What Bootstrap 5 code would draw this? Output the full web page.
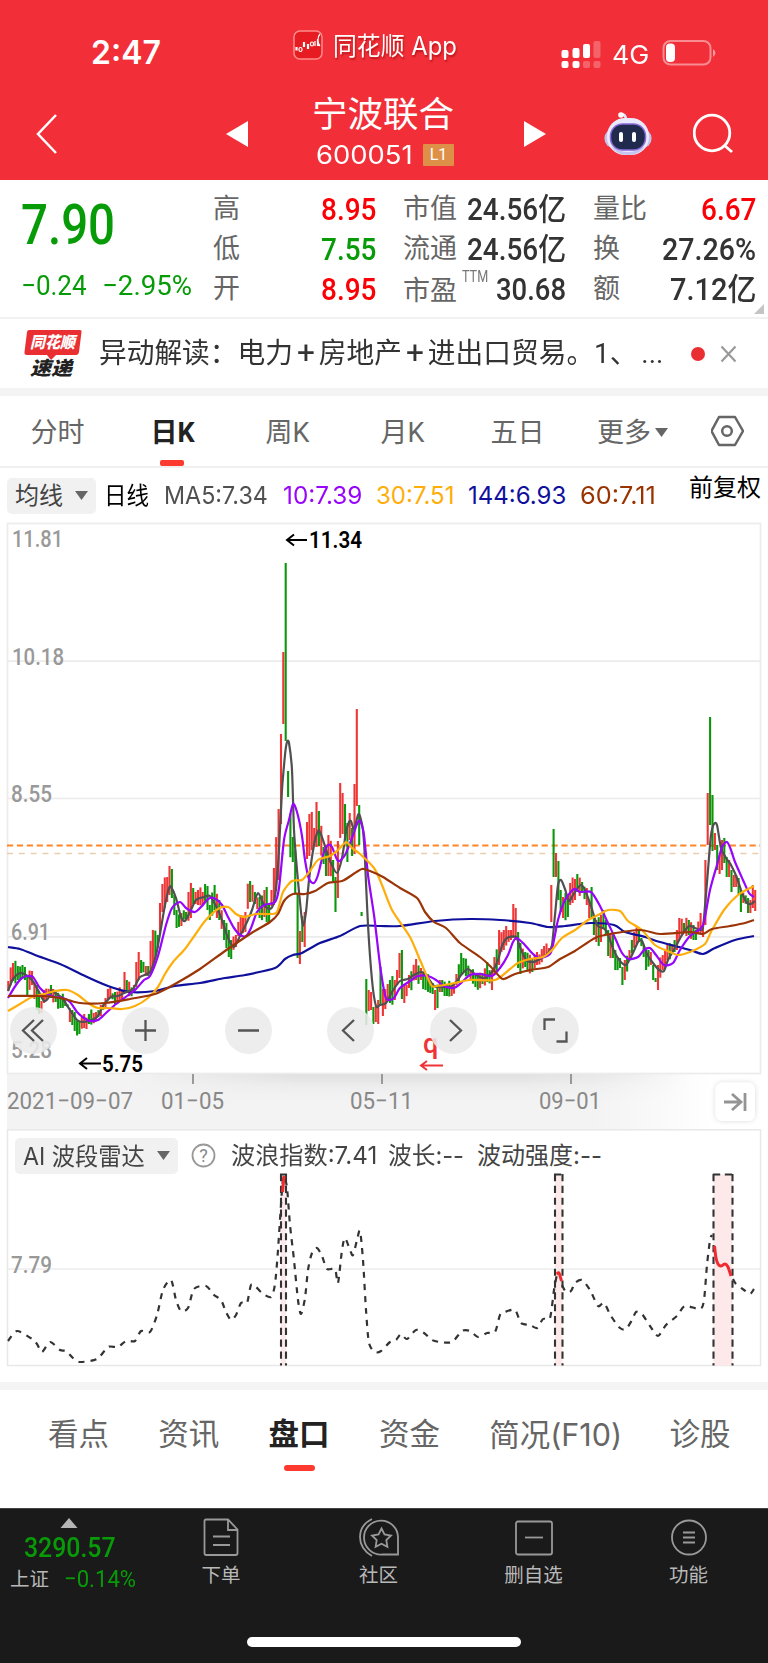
<!DOCTYPE html>
<html lang="zh-CN">
<head>
<meta charset="utf-8">
<meta name="viewport" content="width=device-width, initial-scale=1">
<title>宁波联合 600051</title>
<link href="https://cdn.jsdelivr.net/npm/bootstrap@5.3.0/dist/css/bootstrap.min.css" rel="stylesheet">
<style>
:root{--up:#fb0006;--down:#089b08;--ink:#333;--soft:#666;--brand:#f22f38}
body{width:768px;height:1663px;margin:0;overflow:hidden;background:#fff;color:var(--ink);font-family:Roboto,"Noto Sans CJK SC",sans-serif;line-height:1}
svg{display:block;flex:none}
[data-w]{display:inline-block;white-space:nowrap;transform-origin:0 50%}
[data-w].ralign{transform-origin:100% 50%}
.up{color:var(--up)!important}.down{color:var(--down)!important}
.inter{font-family:Inter,"Noto Sans CJK SC",sans-serif}
.topbar{height:180px;background:var(--brand);color:#fff}
.status-row{height:87px;display:grid;grid-template-columns:91px 202px 40px 228px 51px 50px 1fr;padding-top:18px}
.nav-row{height:93px;display:grid;grid-template-columns:36px 190px 86px 212px 80px 89px 1fr;align-items:center}
.time-text{font-size:32px;font-weight:600}
.app-text{font-size:25px;text-shadow:1px 2px 2px #8008}
.name-text{font-size:35.5px;line-height:38px;margin-top:-4px}
.code-box{width:107px}
.level-tag{width:31px;height:22px;background:#df9048;font-size:16px;border-radius:1px}
.quote{height:139px;padding:9px 11px 0 21px;border-bottom:2px solid #f1f1f1;position:relative;grid-template-columns:165px repeat(3,163px);column-gap:27px}
.quote .price{font-size:55px;font-weight:500;height:72px;line-height:73px}
.quote .chg{font-size:28px;height:48px;line-height:50px;display:grid;grid-template-columns:81px 1fr}
.qrow{height:40px;display:flex;justify-content:space-between;align-items:center;white-space:nowrap}
.qrow b{font-size:31px;font-weight:500;margin-left:-24px}
.qrow .cap{font-size:27px;color:#666}
.ttm{font-size:16px;color:#777;width:0;margin:-24px auto 0 5px}
.corner{position:absolute;right:4px;bottom:3px}
.news{height:69px;padding-left:24px}
.news-text{font-size:28px;width:592px}
.news-text i{font-style:normal;font-weight:400;font-size:32px;line-height:20px;margin:0 4px}
.strip{height:8px;background:#f4f4f4}
.period{height:72px;border-bottom:2px solid #f0f0f0}
.period .cell{width:115px;height:100%;font-size:27px;color:var(--soft);position:relative;padding-top:4px}
.on{font-weight:700;color:#222!important}
.period .on:after{content:"";position:absolute;width:24px;height:6px;border-radius:2px;background:#fd3a30;bottom:0;left:45px}
.ma-row{height:50px;padding:10px 0 0 7px;display:grid;grid-template-columns:97px 60px 119px 93px 92px 112px 109px 1fr;font-size:24px;line-height:36px}
.chip{background:#f1f1f1;border-radius:5px;height:36px;color:#444}
.stage{position:relative;height:611px}
.tools{position:absolute;left:10px;top:489px}
.tool{width:47px;height:47px;border-radius:50%;background:rgba(234,234,234,.88);margin-right:55.5px}
.tool:first-child{margin-right:65px}
.wave{position:relative;height:253px}
.wave-head{position:absolute;top:9px;left:15px;font-size:24px;line-height:35px;display:grid;grid-template-columns:163px 13px 40px 157px 89px 1fr;color:#444}
.sections{height:118px;padding:25px 0 0 48px;gap:49.3px;font-size:30.5px;line-height:40px;color:var(--soft)}
.sections .on{position:relative}
.sections .on:after{content:"";position:absolute;width:31px;height:6px;border-radius:3px;background:#fd3a30;left:15px;top:50px}
.f10{width:131px}
.dock{height:155px;background:#1a1a1a;border-top:1px solid #444;color:#b8b8b8;grid-template-columns:142px 158px 157px 153px 157px;font-size:19.5px;position:relative}
.index-box{padding-top:9px}
.idx-value{font-size:27px;font-weight:500;padding:7px 0 0 24px}
.idx-row{padding:5px 0 0 10px}
.idx-row .idx-name{width:54px;padding-top:2px}
.idx-row .idx-chg{font-size:24px}
.home-bar{position:absolute;left:247px;top:128px;width:274px;height:10px;border-radius:5px;background:#fff}
.dock svg{margin:9px auto 0}
.dock .lbl{margin-top:7px;line-height:24px}
.axis{font-family:Roboto,sans-serif;font-size:24px;fill:#999;font-weight:500}
.dates{fill:#888;font-weight:400}
</style>
</head>
<body>
<header class="topbar">
  <div class="status-row align-items-center">
    <span></span><span class="time-text inter"><span data-w="70">2:47</span></span>
    <svg class="mb-3" width="30" height="30" viewBox="0 0 30 30"><rect x="1" y="1" width="28" height="28" rx="6" fill="#e71c22" stroke="#ff8c8c" stroke-width="1.5"/><path d="M3.500 17v3.500M11 12v5M15 14v5M25 9v7" stroke="#fff" stroke-width="2.200"/><g fill="#e71c22" stroke="#fff" stroke-width="1.200"><rect x="6" y="17.500" width="3" height="4" rx="1.500"/><rect x="17.500" y="12" width="3" height="4" rx="1.500"/><path d="M22 11v5M27 4q-2 2-2 6t2 6"/></g></svg>
    <span class="mb-3 pt-1 app-text"><span class="inter" data-w="124">同花顺 App</span></span>
    <svg class="mt-1" width="40" height="28" viewBox="0 0 40 28" fill="#fff"><rect x="0.500" y="9" width="7" height="8" rx="2"/><rect x="11.500" y="7" width="7" height="10" rx="2"/><rect x="22" y="3" width="7" height="14" rx="2"/><rect x="32.500" y="0" width="7" height="17" rx="2" opacity=".25"/><rect x="0.500" y="20" width="7" height="7" rx="2"/><rect x="11.500" y="20" width="7" height="7" rx="2"/><rect x="22" y="20" width="7" height="7" rx="2" opacity=".25"/><rect x="32.500" y="20" width="7" height="7" rx="2" opacity=".25"/></svg>
    <span class="inter fs-3 pt-1"><span data-w="37">4G</span></span>
    <svg width="56" height="28" viewBox="0 0 56 28"><rect x="1.500" y="2" width="47" height="23.500" rx="7" fill="none" stroke="#fff" stroke-opacity=".45" stroke-width="2"/><rect x="4" y="4.500" width="9" height="18.500" rx="4" fill="#fff"/><path d="M51 10q5 4 0 8z" fill="#fff" opacity=".5"/></svg>
  </div>
  <div class="nav-row">
    <span></span>
    <svg width="22" height="42" viewBox="0 0 22 42"><path d="M20 2 2 21 20 40" fill="none" stroke="#fff" stroke-width="2.500"/></svg>
    <svg width="22" height="26"><path d="M22 0v26L0 13z" fill="#fff"/></svg>
    <div><div class="name-text">宁波联合</div>
      <div class="d-flex align-items-center mt-2 ps-1"><span class="inter fs-3 code-box"><span data-w="97">600051</span></span><span class="level-tag d-flex align-items-center justify-content-center">L1</span></div></div>
    <svg width="22" height="26"><path d="M0 0v26l22-13z" fill="#fff"/></svg>
    <svg width="48" height="48" viewBox="0 0 48 48"><path d="M22 10q0-6-5-6" fill="none" stroke="#e5e2ff" stroke-width="2.500"/><circle cx="17" cy="5" r="2.800" fill="#fff"/><rect x="0.500" y="19" width="47" height="19" rx="9" fill="#c4c3ee"/><rect x="3" y="8" width="42" height="37" rx="18" fill="#ebeafc"/><path d="M7 36q17 12 34 0-5 9-17 9T7 36" fill="#c5c5f0"/><rect x="6.500" y="14" width="35" height="26" rx="12" fill="#202a4c" stroke="#8a68d8" stroke-width="1.500"/><rect x="15" y="22" width="4" height="10" rx="2" fill="#fff"/><rect x="28" y="22" width="4" height="10" rx="2" fill="#fff"/></svg>
    <svg width="42" height="42" viewBox="0 0 42 42"><circle cx="19" cy="20" r="17.800" fill="none" stroke="#fff" stroke-width="2.800"/><path d="m31 32 8 7" stroke="#fff" stroke-width="2.800"/></svg>
  </div>
</header>

<section class="quote d-grid">
  <div>
    <div class="price down"><span data-w="94">7.90</span></div>
    <div class="chg down"><span><span data-w="66">−0.24</span></span><span><span data-w="90">−2.95%</span></span></div>
  </div>
  <div>
    <div class="qrow"><span class="cap">高</span><b class="up ralign" data-w="55">8.95</b></div>
    <div class="qrow"><span class="cap">低</span><b class="down ralign" data-w="55">7.55</b></div>
    <div class="qrow"><span class="cap">开</span><b class="up ralign" data-w="55">8.95</b></div>
  </div>
  <div>
    <div class="qrow"><span class="cap">市值</span><b class="ralign" data-w="99">24.56亿</b></div>
    <div class="qrow"><span class="cap">流通</span><b class="ralign" data-w="99">24.56亿</b></div>
    <div class="qrow"><span class="cap pt-1">市盈</span><span class="ttm"><span data-w="26">TTM</span></span><b class="ralign" data-w="70">30.68</b></div>
  </div>
  <div>
    <div class="qrow"><span class="cap">量比</span><b class="up ralign" data-w="55">6.67</b></div>
    <div class="qrow"><span class="cap">换</span><b class="ralign" data-w="94">27.26%</b></div>
    <div class="qrow"><span class="cap">额</span><b class="ralign" data-w="86">7.12亿</b></div>
  </div>
  <svg class="corner" width="10" height="10"><path d="M10 0v10H0z" fill="#c4c4c4"/></svg>
</section>

<section class="news d-flex align-items-center">
  <svg width="75" height="50" viewBox="0 0 75 50"><path d="M5 1h51q2 0 1.500 2l-2.500 20q-.5 3-3 3H32l-5 5-4-5H3q-3 0-2.500-3L3 3q.5-2 2-2" fill="#ea2f33"/><g font-family="Noto Sans CJK SC" font-weight="900" font-style="italic"><text x="6" y="19" font-size="16" textLength="45" lengthAdjust="spacingAndGlyphs" fill="#fff">同花顺</text><text x="6" y="46" font-size="19" textLength="42" lengthAdjust="spacingAndGlyphs" fill="#222">速递</text></g></svg>
  <div class="news-text"><span data-w="564">异动解读：电力<i>+</i>房地产<i>+</i>进出口贸易。1、<span class="ms-1">...</span></span></div>
  <svg width="50" height="20" viewBox="0 0 50 20"><circle cx="7" cy="10" r="7" fill="#ea2f33"/><path d="m30.500 2.500 14 15M44.500 2.500l-14 15" stroke="#999" stroke-width="2.200"/></svg>
</section>
<div class="strip"></div>

<nav class="period d-flex align-items-center">
  <div class="cell d-flex align-items-center justify-content-center">分时</div>
  <div class="cell on d-flex align-items-center justify-content-center">日K</div>
  <div class="cell d-flex align-items-center justify-content-center">周K</div>
  <div class="cell d-flex align-items-center justify-content-center">月K</div>
  <div class="cell d-flex align-items-center justify-content-center">五日</div>
  <div class="cell d-flex align-items-center justify-content-center gap-1">更多<svg width="13" height="10"><path d="M0 0h13L6.500 9z" fill="#666"/></svg></div>
  <svg class="ms-auto me-4" width="33" height="32" viewBox="1 0 33 32"><path d="M9 2h16l8 14-8 14H9L1.500 16z" fill="none" stroke="#666" stroke-width="2.500" stroke-linejoin="round"/><circle cx="17" cy="16" r="4.800" fill="none" stroke="#666" stroke-width="2.500"/></svg>
</nav>

<div class="ma-row">
  <span class="chip d-flex align-items-center justify-content-between px-2 me-2"><span data-w="48">均线</span><svg width="13" height="10"><path d="M0 0h13L6.500 9z" fill="#666"/></svg></span>
  <span class="text-black"><span data-w="45">日线</span></span>
  <span style="color:#505050"><span class="inter" data-w="104">MA5:7.34</span></span>
  <span style="color:#9706fa"><span class="inter" data-w="79">10:7.39</span></span>
  <span style="color:#feae0b"><span class="inter" data-w="78">30:7.51</span></span>
  <span style="color:#10109d"><span class="inter" data-w="98">144:6.93</span></span>
  <span style="color:#993300"><span class="inter" data-w="76">60:7.11</span></span>
  <span class="text-black" style="margin-top:-8px"><span data-w="72">前复权</span></span>
</div>

<div class="stage">
  <svg id="kline" width="768" height="611" viewBox="0 518 768 611">
    <defs>
      <linearGradient id="fadeR"><stop offset="0" stop-color="#f3f3f3"/><stop offset=".78" stop-color="#f3f3f3"/><stop offset=".94" stop-color="#fff"/></linearGradient>
      <linearGradient id="shade" x2="0" y2="1"><stop offset="0" stop-color="#dedede"/><stop offset="1" stop-color="#f3f3f3" stop-opacity="0"/></linearGradient>
      <linearGradient id="side"><stop offset="0" stop-color="#fff" stop-opacity="0"/><stop offset=".3" stop-color="#fff"/><stop offset=".7" stop-color="#fff"/><stop offset="1" stop-color="#fff" stop-opacity="0"/></linearGradient>
      <mask id="mid"><rect x="130" y="1070" width="560" height="50" fill="url(#side)"/></mask>
      <filter id="soft" x="-30%" y="-30%" width="160%" height="160%"><feDropShadow dx="0" dy="0" stdDeviation="2.500" flood-opacity=".15"/></filter>
    </defs>
    <rect x="7" y="1074" width="753" height="55" fill="url(#fadeR)"/>
    <rect x="130" y="1074" width="560" height="28" fill="url(#shade)" mask="url(#mid)"/>
    <g fill="none" stroke="#ececec" stroke-width="1.700"><rect x="7.500" y="523.500" width="753" height="550"/><path d="M8 661.200h752M8 798.500h752M8 936.800h752"/></g>
    <g class="axis">
      <text x="12" y="547" textLength="51" lengthAdjust="spacingAndGlyphs">11.81</text>
      <text x="12" y="665" textLength="52" lengthAdjust="spacingAndGlyphs">10.18</text>
      <text x="11" y="802" textLength="41" lengthAdjust="spacingAndGlyphs">8.55</text>
      <text x="11" y="940" textLength="39" lengthAdjust="spacingAndGlyphs">6.91</text>
      <text x="11" y="1058" textLength="41" lengthAdjust="spacingAndGlyphs">5.28</text>
    </g>
    <path d="M7 845.500h753" stroke="#ff8529" stroke-width="2.200" stroke-dasharray="6.200 3.700"/>
    <path d="M7 853.500h753" stroke="#e9cfae" stroke-width="1.700" stroke-dasharray="6 5.830"/>
    <g id="bars" stroke-width="2.100"></g>
    <g id="lines" fill="none" stroke-width="2.200" stroke-linejoin="round"></g>
    <g fill="none" stroke="#000" stroke-width="2"><path d="M307 540h-20m7-5.500-7 5.500 7 5.500M101 1063.500H80m7-5.500-7 5.500 7 5.500"/><path d="M443 1065.500h-22m6-4.500-6 4.500 6 4.500" stroke="#ef3338"/></g>
    <g font-size="24" font-weight="600" font-family="Roboto"><text x="309" y="548" textLength="53" lengthAdjust="spacingAndGlyphs">11.34</text><text x="102" y="1071.500" textLength="41" lengthAdjust="spacingAndGlyphs">5.75</text><text x="423" y="1053" font-size="27" font-weight="500" fill="#ef3338">q</text></g>
    <path d="M193 1074v10M382 1074v10M571 1074v10" stroke="#999" stroke-width="2"/>
    <g class="axis dates">
      <text x="7" y="1108.500" textLength="126" lengthAdjust="spacingAndGlyphs">2021−09−07</text>
      <text x="161" y="1108.500" textLength="63" lengthAdjust="spacingAndGlyphs">01−05</text>
      <text x="350" y="1108.500" textLength="63" lengthAdjust="spacingAndGlyphs">05−11</text>
      <text x="539" y="1108.500" textLength="62" lengthAdjust="spacingAndGlyphs">09−01</text>
    </g>
    <rect x="715.500" y="1082.500" width="39.500" height="38.500" rx="7" fill="#fff" filter="url(#soft)"/>
    <path d="M724 1102h16M732 1094l9 8-9 8M745 1093v18" fill="none" stroke="#949494" stroke-width="2.800"/>
  </svg>
  <div class="tools d-flex">
    <svg class="tool" viewBox="0 0 47 47"><path d="M24 13 13 23.500 24 34M33 13 22 23.500 33 34" fill="none" stroke="#555" stroke-width="2.300"/></svg>
    <svg class="tool" viewBox="0 0 47 47"><path d="M13 23.500h21M23.500 13v21" stroke="#555" stroke-width="2.300"/></svg>
    <svg class="tool" viewBox="0 0 47 47"><path d="M13 23.500h21" stroke="#555" stroke-width="2.300"/></svg>
    <svg class="tool" viewBox="0 0 47 47"><path d="M27 13 16 23.500 27 34" fill="none" stroke="#555" stroke-width="2.300"/></svg>
    <svg class="tool" viewBox="0 0 47 47"><path d="M20 13 31 23.500 20 34" fill="none" stroke="#555" stroke-width="2.300"/></svg>
    <svg class="tool" viewBox="0 0 47 47"><path d="M12.500 23V12.500H23M34.500 24.500v10H24.500" fill="none" stroke="#555" stroke-width="2.300"/></svg>
  </div>
</div>

<div class="wave">
  <svg id="wavesvg" width="768" height="253" viewBox="0 1129 768 253">
    <rect x="7.500" y="1129.800" width="753" height="235.700" fill="#fff" stroke="#e8e8e8" stroke-width="1.500"/>
    <path d="M8 1269h752" stroke="#ececec" stroke-width="1.500"/>
    <g fill="#fde9e9"><path d="M281 1174.500h5v191h-5zM555 1174.500h7.500v191H555zM713.500 1174.500h19v191h-19z"/></g>
    <g fill="none" stroke="#333" stroke-width="2.100" stroke-dasharray="7.200 4.630"><path d="M281 1174v191.500M286 1174v191.500M555 1174v191.500M562.500 1174v191.500M713.500 1174v191.500M732.500 1174v191.500M280 1174.500h7M554 1174.500h9.500M713 1174.500h20"/></g>
    <text class="axis" x="11" y="1273" textLength="41" lengthAdjust="spacingAndGlyphs">7.79</text>
  </svg>
  <div class="wave-head">
    <span class="chip d-flex align-items-center justify-content-between px-2"><span class="inter" data-w="122">AI 波段雷达</span><svg width="13" height="10"><path d="M0 0h13L6.500 9z" fill="#666"/></svg></span>
    <span></span>
    <svg class="mt-1" width="26" height="28" viewBox="0 0 26 28"><circle cx="12.500" cy="13.500" r="11" fill="none" stroke="#999" stroke-width="1.800"/><text x="12.500" y="20" text-anchor="middle" font-size="18" fill="#888">?</text></svg>
    <span><span class="inter" data-w="146">波浪指数:7.41</span></span>
    <span><span class="inter" data-w="76">波长:--</span></span>
    <span><span class="inter" data-w="125">波动强度:--</span></span>
  </div>
</div>
<div class="strip"></div>

<nav class="sections d-flex text-nowrap">
  <span>看点</span><span>资讯</span><span class="on">盘口</span><span>资金</span><span class="f10"><span class="inter" data-w="133">简况(F10)</span></span><span>诊股</span>
</nav>

<footer class="dock d-grid text-center">
  <div class="index-box">
    <svg class="m-0" width="142" height="10"><path d="M60.500 10h17L69 0z" fill="#b5b5b5"/></svg>
    <div class="text-start down idx-value"><span data-w="92">3290.57</span></div>
    <div class="d-flex align-items-center idx-row"><span class="idx-name text-start">上证</span><span class="down idx-chg" data-w="72">−0.14%</span></div>
  </div>
  <div><svg width="37" height="39" viewBox="0 0 37 39"><path d="M3 1.500h22l9.500 10V35q0 2-2 2H3q-1.500 0-1.500-2V3Q1.500 1.500 3 1.500M25 1.500V12h9.500M10 18.500h17M10 27h17" fill="none" stroke="#999" stroke-width="1.800"/></svg><div class="lbl">下单</div></div>
  <div><svg width="42" height="39" viewBox="0 0 42 39"><path d="M14 1q-12 6-12 18t12 19M40 36.500H24.500A17 17 0 1 1 40 20z" fill="none" stroke="#999" stroke-width="1.800"/><path d="m23.500 10.500 3 6 6.500 1-4.700 4.600 1.100 6.700-5.900-3.100-5.900 3.100 1.100-6.700L14 17.500l6.500-1z" fill="none" stroke="#999" stroke-width="1.800"/></svg><div class="lbl">社区</div></div>
  <div><svg width="40" height="39" viewBox="0 0 40 39"><rect x="2" y="3.500" width="36" height="33" rx="2" fill="none" stroke="#999" stroke-width="1.800"/><path d="M11 19.500h18" stroke="#999" stroke-width="1.800"/></svg><div class="lbl">删自选</div></div>
  <div><svg width="40" height="39" viewBox="0 0 40 39"><circle cx="20" cy="19.500" r="17" fill="none" stroke="#999" stroke-width="1.800"/><path d="M14 14.500h12M14 19.500h12M14 24.500h12" stroke="#999" stroke-width="1.800"/></svg><div class="lbl">功能</div></div>
  <div class="home-bar"></div>
</footer>

<script src="https://cdn.jsdelivr.net/npm/bootstrap@5.3.0/dist/js/bootstrap.bundle.min.js"></script>
<script>
document.querySelectorAll('[data-w]').forEach(el=>{el.style.transform='scaleX('+(el.dataset.w/el.offsetWidth).toFixed(4)+')'});

const NS='http://www.w3.org/2000/svg';
function add(parent,tag,attrs){const e=document.createElementNS(NS,tag);for(const k in attrs)e.setAttribute(k,attrs[k]);parent.appendChild(e);return e}
const pts=s=>s.trim().split(/\s+/).map(p=>p.split(',').map(Number));
function curve(p){let d='M'+p[0];for(let i=0;i<p.length-1;i++){const a=p[i-1]||p[i],b=p[i],c=p[i+1],e=p[i+2]||c,t=.13;d+='C'+[b[0]+(c[0]-a[0])*t,b[1]+(c[1]-a[1])*t,c[0]-(e[0]-b[0])*t,c[1]-(e[1]-b[1])*t,c[0],c[1]].map(v=>v.toFixed(1)).join(' ')}return d}

// x, high, low, and r (up) or g (down) where the day's direction is fixed
const bars='8,981,991,r 13,963,981,r 18,966,980,g 24,967,980,g 28,975,995,g 32,971,985,r 36,985,1010,g 41,1001,1013,r 45,990,1003 50,985,998,g 55,990,1002,g 60,996,1008,g 66,998,1006 72,1010,1025,g 79,1022,1034,g 84,1014,1028 90,1014,1024 95,1012,1021,r 100,1005,1016,r 105,998,1007,r 109,989,1000 115,992,1004,g 121,990,1000 124,972,993,r 128,980,993,g 133,985,992 138,952,980,r 142,960,973,g 147,966,976 152,930,970,r 157,935,948,g 160,903,935,r 162,884,912,r 166,877,902,r 169,866,895,r 171,869,898,g 174,895,915,g 177,910,928,g 181,913,926,r 186,912,920 190,883,918,r 193,888,904,g 198,890,905 202,892,905,r 205,884,902 208,886,910,g 210,905,920,g 214,885,910,g 219,900,920,g 225,920,940,g 228,930,957,g 231,940,959,g 235,935,947,r 240,915,935,r 245,912,932 249,868,900,r 251,881,902,g 256,892,904 259,897,918,g 264,890,917,r 266,887,922,g 270,905,922,g 272.5,890,906,r 275,868,905,r 277.5,809,880,r 279.8,734,824,r 282.3,652,724,r 284.7,563,741,g 287,771,797,g 289.2,793,846,r 291.7,837,862,g 294,850,894,g 296.5,893,958,g 299,931,964,r 301.3,916,942,g 303.6,912,947,r 305.8,850,880,r 308.2,822,859,r 310.5,814,856,r 313,809,846,r 315.2,828,845,r 317.6,802,847,r 320,811,846,g 323,847,864,g 326,850,876,g 329.5,835,876,r 332,842,872,g 334.2,860,881,g 336.5,877,912,g 339,841,898,r 341.4,783,838,r 343.7,793,834,r 346,804,840,g 348.3,823,862,g 350.6,813,840,r 353,828,856,g 355.4,784,854,r 357.9,709,806,r 360.3,805,845,g 362.6,912,916,g 367.3,979,1025,g 369.7,990,1011,r 372,992,1010,r 374.5,1007,1024,g 377,1006,1022,r 379.2,1000,1024,r 381.5,967,1005,g 384,989,1016,r 387,984,1000,r 391,980,1003,g 395,980,1000,r 398,970,985,r 400.3,953,978,r 402.6,950,999,g 405,985,1003,r 410,975,988 416,959,980,r 420,968,980 426,975,990,g 432,983,994,g 436,990,1010,r 441,980,992 446,984,996,g 452,985,996,r 457,974,985,r 462,953,975,g 464,958,972,g 470,970,980 476,975,987 482,973,984 487,962,982,g 491,970,990,r 495,957,975,r 499,930,965,r 503,930,950 510,930,940 513.7,904,938,r 516,908,940,r 518.5,932,968,g 521,943,974,g 526,952,967 532,958,972,g 538,952,965,r 545,946,958,r 549.5,948,953,r 551.8,885,922,r 554.1,829,877,g 556.4,853,877,r 558.7,861,900,g 561,890,912,g 564,897,918,r 568,895,917,g 571,883,905,r 575,879,900,r 578,874,892,g 583,882,893 588,888,905 590,900,918,r 592,887,918,g 595,915,935,g 597,920,942,r 601,915,942,r 603,910,928,g 606,920,935,g 609,930,956,g 613,935,958 616,950,970,g 620,958,968,g 623,967,985,g 625,960,980,r 630,950,960,r 634,932,948,r 638,930,942,g 642,938,946,g 646,950,970,g 650,952,965,r 653,965,980,g 656,978,982,g 658,965,990,r 663,955,970,r 668,945,960,r 674,940,952 677,930,950,r 680,918,940,r 683,923,932 689,920,935,g 693,925,940 696,930,940,g 701,913,935,r 703,925,937,r 705.3,860,925,r 707.5,793,845,r 709.8,717,825,g 712.2,795,851,g 714.5,833,850,r 717,845,870,g 719.3,855,874,r 721.7,840,870,r 724,838,863,g 727,857,877,g 729,860,877,r 732,870,892,g 735,875,887,r 738,878,895,g 741,890,912,g 744,893,903,r 748,898,913,g 751,900,913,r 753,885,908,r 755,890,911,r'.split(' ').map(b=>b.split(','));
let seed=11;const rnd=()=>(seed=(seed*16807)%2147483647)/2147483647;
const gb=document.getElementById('bars');
for(let x=8.3,k=0;x<756;x+=2.371){
  while(k<bars.length-2&&+bars[k+1][0]<x)k++;
  const a=bars[k],b=bars[k+1],t=Math.max(0,Math.min(1,(x-a[0])/(b[0]-a[0]))),n=t<.5?a:b,near=Math.abs(n[0]-x)<1.2;
  if(x>363.5&&x<366.1)continue;
  let hi=near?+n[1]:+a[1]+(b[1]-a[1])*t+(rnd()-.5)*8,lo=near?+n[2]:+a[2]+(b[2]-a[2])*t+(rnd()-.5)*8;
  const c=near&&n[3]?n[3]:(rnd()<(+b[1]>+a[1]?.3:.65)?'r':'g');
  add(gb,'path',{d:`M${x.toFixed(1)} ${hi.toFixed(1)}V${lo.toFixed(1)}`,stroke:c=='r'?'#ef3535':'#0b960b'});
}
const gl=document.getElementById('lines');
[['#10109d','8,947 20,949 35,955 60,964 85,976 108,986 130,992 155,991 175,986 200,983 225,978 245,975 275,968 285,959 293,955 302,953 320,943 340,936 360,926 380,926 400,926 435,921 470,919 500,920 530,923 548,927 565,926 590,923 614,925 625,932 645,937 660,942 690,950 703,954 715,948 735,940 754,936'],
['#505050','8,991 13,979 20,973 26,975 32,980 38,990 44,1001 49,997 51,990 55,993 62,998 70,1010 77,1020 83,1022 92,1020 98,1016 103,1006 111,997 118,996 124,993 133,989 140,977 150,972 156,955 160,934 165,905 169,888 171,887 176,898 181,917 185,921 190,912 196,900 204,897 210,896 217,908 222,920 228,938 234,947 240,936 247,922 252,910 258,893 264,905 270,909 274,902 277,878 279,850 282,790 285,755 287,742 289,743 292,770 294,830 297,870 301,912 303,926 306,912 309,880 314,845 318,831 320,832 324,843 330,861 337,873 342,858 346,832 349,822 351,821 354,829 358,815 360,816 363,830 365,860 368,925 372,980 376,1006 380,1005 386,1003 392,992 400,981 408,979 414,975 422,972 428,978 434,986 440,987 450,987 456,982 462,974 468,969 476,975 484,978 492,972 498,960 502,946 507,938 516,937 520,947 526,960 533,962 540,959 548,953 552,945 555,915 558,885 561,880 565,889 569,901 573,895 577,889 581,885 585,890 591,906 597,925 603,928 607,932 614,951 620,961 626,965 632,955 638,942 642,941 647,954 653,963 659,970 664,971 668,960 676,946 682,935 689,926 695,928 702,930 704,918 708,870 711,835 714,824 717,825 721,848 726,858 731,865 737,878 742,893 747,903 751,904 755,901'],
['#9706fa','8,998 16,985 22,978 28,976 33,977 40,988 47,994 55,997 63,998 70,1002 77,1012 84,1018 90,1021 98,1020 106,1013 116,1004 127,996 136,989 144,980 150,976 158,956 166,925 172,908 180,902 186,908 195,912 202,906 208,899 214,898 222,905 228,917 234,928 240,935 246,936 251,928 257,912 264,905 275,902 279,888 284,840 289,820 293,804 297,812 302,836 305,860 309,879 314,883 318,875 323,855 328,845 332,847 338,861 345,855 352,838 357,824 360,821 364,835 368,875 374,915 380,965 385,995 388,1000 394,998 400,988 410,981 418,976 428,976 436,980 444,986 454,988 460,984 470,975 480,974 492,976 500,968 508,955 513,942 517,938 524,944 532,953 539,958 550,954 554,940 558,920 565,900 574,889 580,892 591,892 600,906 608,923 616,940 622,953 629,959 638,957 644,950 650,948 656,955 664,965 673,963 680,950 690,936 700,929 704,922 710,890 717,865 722,847 727,842 731,850 735,862 743,880 749,893 754,897'],
['#feae0b','8,1011 20,1004 32,997 44,994 55,991 67,990 78,995 88,1003 98,1008 108,1008 122,1009 135,1006 148,998 158,987 165,974 173,962 185,949 195,935 205,921 218,909 228,907 236,914 244,917 256,914 270,914 277,912 283,892 292,881 302,880 310,871 318,860 330,856 338,850 346,842 352,848 360,854 374,868 382,885 392,910 410,937 420,960 431,985 437,986 450,984 470,980 495,980 510,969 518,963 530,959 543,957 552,950 562,938 575,930 588,920 600,914 608,910 620,911 628,921 642,930 655,945 670,952 678,955 690,952 705,944 711,932 724,910 738,895 754,886'],
['#9b3508','8,996 45,996 65,999 80,1003 105,1003 130,999 155,994 175,984 200,969 225,951 250,934 270,922 278,914 284,901 293,894 305,894 315,891 328,883 342,881 352,875 362,869 370,871 383,877 400,888 417,898 425,912 434,922 446,928 460,943 480,957 490,966 500,977 504,979 515,974 530,970 548,967 560,959 575,951 595,938 610,934 640,930 660,934 690,932 703,934 712,929 730,926 745,923 754,920']
].forEach(([c,s])=>add(gl,'path',{d:curve(pts(s)),stroke:c}));

const w=document.getElementById('wavesvg');
const dash={fill:'none',stroke:'#333','stroke-width':2.2,'stroke-dasharray':'6 6'};
['8,1341 17,1331 32,1339 37,1344 42,1352 50,1342 60,1350 66,1351 73,1358 80,1362 97,1359 108,1347 118,1347 126,1341 135,1341 141,1331 150,1332 157,1315 163,1290 171,1280 176,1300 181,1311 188,1308 194,1289 206,1286 214,1295 221,1300 226,1312 231,1320 236,1315 241,1303 247,1303 251,1285 256,1287 262,1293 271,1297 275,1284 278,1250 282,1190 284,1176 287,1188 290,1225 294,1260 298,1300 301,1314 305,1298 308,1270 312,1253 317,1248 322,1256 327,1269 335,1269 338,1283 342,1250 345,1238 350,1250 353,1255 357,1240 360,1231 363,1260 366,1310 369,1343 375,1352 381,1351 390,1342 396,1340 401,1334 407,1339 416,1330 424,1333 432,1340 440,1342 452,1342 462,1331 470,1331 478,1337 487,1333 495,1332 500,1315 505,1312 515,1310 521,1323 530,1325 537,1328 543,1319 550,1318 554,1290 557,1274',
'562,1285 566,1292 571,1291 575,1283 582,1280 590,1290 598,1306 604,1303 611,1316 620,1328 626,1329 632,1320 636,1312 642,1314 650,1326 658,1336 666,1325 677,1316 685,1306 700,1309 704,1300 707,1265 710,1240 712,1235',
'733,1279 736,1284 744,1290 750,1294 754,1289'].forEach(s=>add(w,'path',{...dash,d:curve(pts(s))}));
['282.5,1192 284,1176','556.5,1274 559,1273 561.5,1281','714.5,1246 716,1258 718,1264 721,1266 725,1264 728,1267 731,1276'].forEach(s=>add(w,'path',{fill:'none',stroke:'#f02b30','stroke-width':3,d:curve(pts(s))}));
</script>
</body>
</html>
